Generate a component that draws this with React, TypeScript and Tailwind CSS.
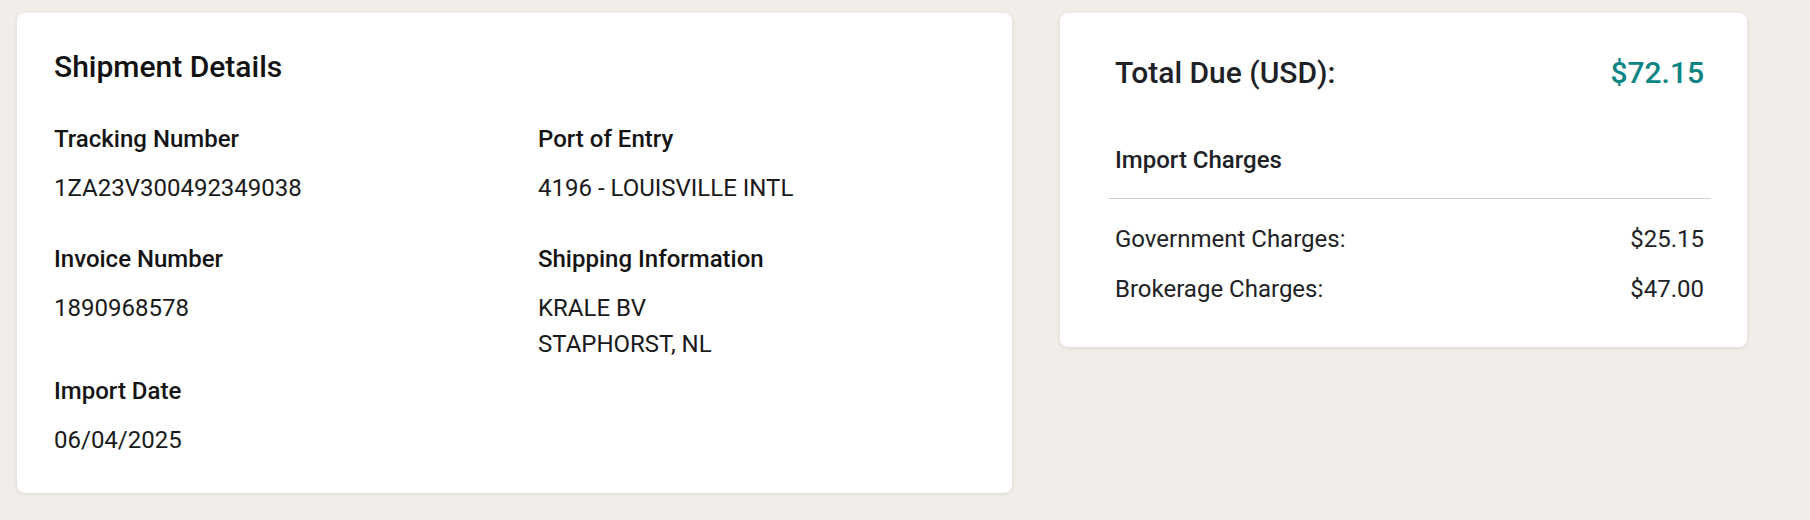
import React from "react";

function Field({ label, lines }: { label: string; lines: string[] }) {
  return (
    <div>
      <div className="text-[24px] leading-9 font-medium text-[#141414]">{label}</div>
      <div className="mt-[13px]">
        {lines.map((l) => (
          <div key={l} className="text-[24px] leading-9 text-[#1a1a1a]">
            {l}
          </div>
        ))}
      </div>
    </div>
  );
}

export default function App() {
  return (
    <div className="h-[520px] overflow-hidden bg-[#f1ede9] font-['Roboto','Noto_Sans',sans-serif]">
      <div className="flex items-start gap-[48px] pl-[17px] pt-[13px]">
        <section className="w-[995px] rounded-lg bg-white pt-[31px] pb-[35px] pl-[37px] pr-9 shadow-[0_1px_4px_rgba(60,40,20,0.10)]">
          <h2 className="text-[30px] leading-[45px] font-medium text-[#121212]">Shipment Details</h2>
          <div className="mt-[32px] grid grid-cols-[484px_1fr]">
            <Field label="Tracking Number" lines={["1ZA23V300492349038"]} />
            <Field label="Port of Entry" lines={["4196 - LOUISVILLE INTL"]} />
            <div className="mt-[35px]">
              <Field label="Invoice Number" lines={["1890968578"]} />
            </div>
            <div className="mt-[35px]">
              <Field label="Shipping Information" lines={["KRALE BV", "STAPHORST, NL"]} />
            </div>
            <div className="mt-[11px]">
              <Field label="Import Date" lines={["06/04/2025"]} />
            </div>
            <div />
          </div>
        </section>

        <section className="w-[687px] rounded-lg bg-white pt-[37px] pb-[40px] pl-[48px] pr-[36px] shadow-[0_1px_4px_rgba(60,40,20,0.10)]">
          <div className="flex items-center justify-between px-[7px]">
            <span className="text-[30px] leading-[45px] font-medium text-[#1e2226]">Total Due (USD):</span>
            <span className="text-[30px] leading-[45px] font-medium text-[#0b8484]">$72.15</span>
          </div>
          <div className="mt-[47px] px-[7px] text-[24px] leading-9 font-medium text-[#1e2226]">Import Charges</div>
          <div className="mt-[20px] h-px bg-[#cfcfcf]" />
          <div className="mt-[22px] flex justify-between px-[7px] text-[24px] leading-9 text-[#1e2226]">
            <span>Government Charges:</span>
            <span>$25.15</span>
          </div>
          <div className="mt-[14px] flex justify-between px-[7px] text-[24px] leading-9 text-[#1e2226]">
            <span>Brokerage Charges:</span>
            <span>$47.00</span>
          </div>
        </section>
      </div>
    </div>
  );
}
